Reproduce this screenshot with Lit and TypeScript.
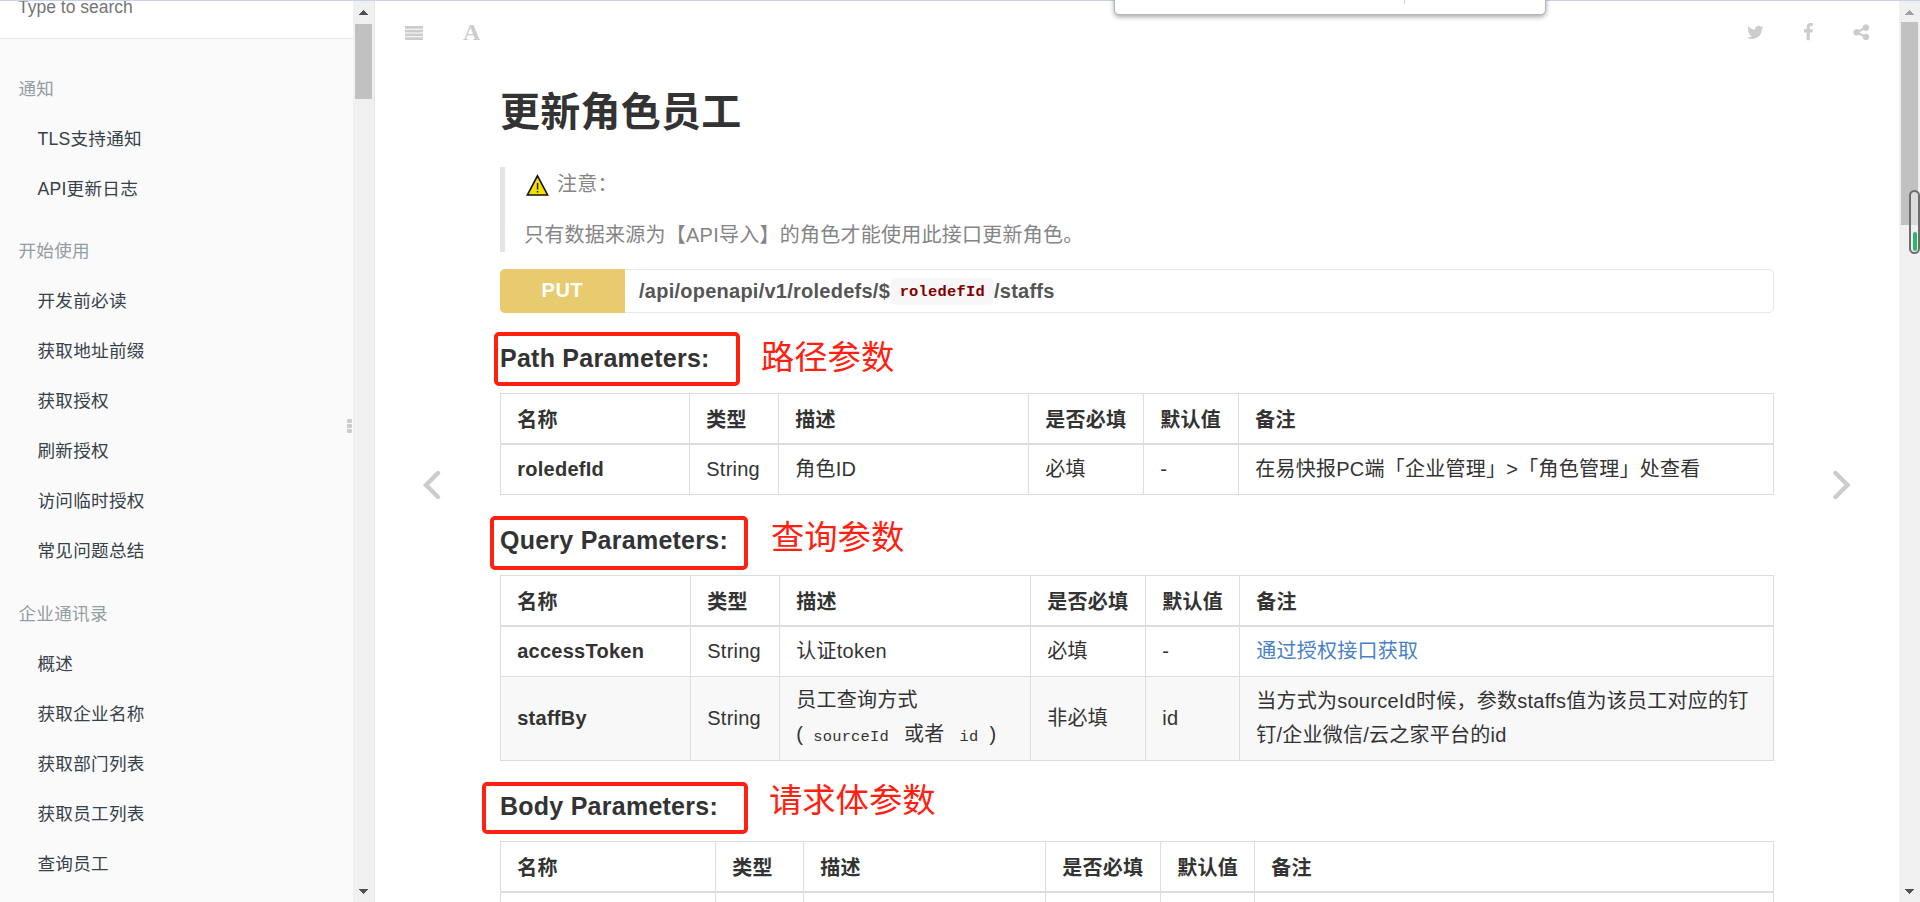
import { LitElement, html, css, svg, TemplateResult } from "lit";
import { customElement, property } from "lit/decorators.js";

interface Group { title: string; items: string[]; }

const GROUPS: Group[] = [
  { title: "通知", items: ["TLS支持通知", "API更新日志"] },
  { title: "开始使用", items: ["开发前必读", "获取地址前缀", "获取授权", "刷新授权", "访问临时授权", "常见问题总结"] },
  { title: "企业通讯录", items: ["概述", "获取企业名称", "获取部门列表", "获取员工列表", "查询员工"] },
];

const HEADERS = ["名称", "类型", "描述", "是否必填", "默认值", "备注"];

const TWITTER = "M1684 408q-67 98-162 167 1 14 1 42 0 130-38 259.5t-115.5 248.5-184.5 210.5-258 146-323 54.5q-271 0-496-145 35 4 78 4 225 0 401-138-105-2-188-64.5t-114-159.5q33 5 61 5 43 0 85-11-112-23-185.5-111.5t-73.5-205.5v-4q68 38 146 41-66-44-105-115t-39-154q0-88 44-163 121 149 294.5 238.5t371.5 99.5q-8-38-8-74 0-134 94.5-228.5t228.5-94.5q140 0 236 102 109-21 205-78-37 115-142 178 93-10 186-50z";
const FACEBOOK = "M1343 12v264h-157q-86 0-116 36t-30 108v189h293l-39 296h-254v759h-306v-759h-255v-296h255v-218q0-186 104-288.5t277-102.5q147 0 228 12z";
const SHARE = "M1344 1024q133 0 226.5 93.5t93.5 226.5-93.5 226.5-226.5 93.5-226.5-93.5-93.5-226.5q0-12 2-34l-360-180q-92 86-218 86-133 0-226.5-93.5t-93.5-226.5 93.5-226.5 226.5-93.5q126 0 218 86l360-180q-2-22-2-34 0-133 93.5-226.5t226.5-93.5 226.5 93.5 93.5 226.5-93.5 226.5-226.5 93.5q-126 0-218-86l-360 180q2 22 2 34t-2 34l360 180q92-86 218-86z";

@customElement("scroll-track")
class ScrollTrack extends LitElement {
  @property({ type: Number }) start = 0;
  @property({ type: Number }) size = 0;
  @property({ type: Boolean }) dim = false;

  static styles = css`
    :host { display: flex; flex-direction: column; align-items: center; width: 21px; height: 100%; background: #f0f0f0; box-sizing: border-box; padding: 10px 0 8px; flex: none; }
    .thumb { width: 17px; background: #c1c1c1; }
    .space { flex: 1; }
    svg { display: block; fill: #505050; }
    .dim { fill: #a3a3a3; }
  `;

  render() {
    return html`
      <svg class=${this.dim ? "dim" : ""} width="9" height="5" shape-rendering="crispEdges"><path d="M4 0h1v1h1v1h1v1h1v1h1v1H0V4h1V3h1V2h1V1h1z" /></svg>
      <div class="thumb" style="margin-top:${this.start - 15}px;height:${this.size}px"></div>
      <div class="space"></div>
      <svg width="9" height="5" shape-rendering="crispEdges"><path d="M0 0h9v1H8v1H7v1H6v1H5v1H4V4H3V3H2V2H1V1H0z" /></svg>`;
  }
}

@customElement("param-table")
class ParamTable extends LitElement {
  @property({ attribute: false }) widths: number[] = [];
  @property({ attribute: false }) rows: { cells: (string | TemplateResult)[]; height: number }[] = [];

  static styles = css`
    :host { display: block; }
    table { table-layout: fixed; width: 1274px; border-collapse: separate; border-spacing: 0; border-top: 1px solid #ddd; border-left: 1px solid #ddd; }
    th, td { box-sizing: border-box; padding: 0 0 0 16.25px; text-align: left; vertical-align: middle; border-right: 1px solid #ddd; border-bottom: 1px solid #ddd; line-height: 34px; color: #333; white-space: nowrap; }
    th { height: 51px; padding-top: 2px; border-bottom-width: 2px; font-weight: 700; }
    td { padding-bottom: 1px; }
    tbody tr:nth-child(even) td { background: #f8f8f8; }
    td:first-child { font-weight: 700; }
    .link { color: #4a80c8; text-decoration: none; }
    .code { font-family: "Liberation Mono", monospace; font-size: 15.4px; padding: 0 15px 0 10px; letter-spacing: 0.25px; }
    .code.last { padding: 0 11px 0 15px; }
  `;

  render() {
    return html`<table>
      <colgroup>${this.widths.map((w) => html`<col style="width:${w}px" />`)}</colgroup>
      <thead><tr>${HEADERS.map((h) => html`<th>${h}</th>`)}</tr></thead>
      <tbody>${this.rows.map((r) => html`<tr style="height:${r.height}px">${r.cells.map((c) => html`<td>${c}</td>`)}</tr>`)}</tbody>
    </table>`;
  }
}

@customElement("app-root")
class AppRoot extends LitElement {
  static styles = css`
    :host { display: flex; position: relative; width: 1920px; height: 902px; overflow: hidden; background: #fff; font-family: "Liberation Sans", "Noto Sans CJK SC", sans-serif; font-size: 20px; letter-spacing: 0.25px; color: #333; }
    .topline { position: absolute; left: 0; top: 0; width: 100%; height: 1px; background: #c6d3e8; z-index: 3; }
    .sidebar { display: flex; position: relative; width: 374px; height: 902px; border-right: 1px solid #e4e4e4; background: #fafafa; flex: none; }
    .nav { width: 353px; font-size: 17.6px; overflow: hidden; }
    .search { height: 38px; border-bottom: 1px solid #eaeaea; background: #fff; color: #757575; }
    .search span { display: block; padding-left: 18px; font-size: 17.5px; line-height: 14px; letter-spacing: 0; }
    .groups { padding-top: 25px; }
    .group { margin-bottom: 13px; }
    .group:first-child { margin-bottom: 12px; }
    .head, .item { height: 50px; line-height: 50px; white-space: nowrap; }
    .head { padding-left: 18.5px; color: #939da3; }
    .item { padding-left: 37.5px; color: #364149; }
    .grip { position: absolute; left: 347px; top: 419px; display: grid; gap: 1px; }
    .grip i { width: 5px; height: 4px; background: #ccc; border-radius: 1px; }

    .main { flex: 1; position: relative; height: 902px; overflow: hidden; }
    .toolbar { display: flex; align-items: center; height: 65px; padding: 0 28px 0 30px; }
    .toolbar svg { display: block; fill: #ccc; }
    .glyph-a { margin-left: 40px; font: 700 24px/65px "Liberation Serif", serif; color: #ccc; letter-spacing: 0; }
    .social { margin-left: auto; display: flex; align-items: center; gap: 34.5px; }
    .article { width: 1274px; margin-left: 125px; }
    h1 { margin: 0 0 10px; height: 92px; line-height: 94px; font-size: 40px; font-weight: 700; }
    .quote { box-sizing: border-box; height: 85px; border-left: 5px solid #e5e5e5; padding-left: 19px; color: #858585; display: flex; flex-direction: column; gap: 17px; }
    .quote p { margin: 0; line-height: 36px; height: 34px; display: flex; align-items: center; white-space: nowrap; }
    .quote svg { margin: 1px 8px 0 2px; }
    .endpoint { box-sizing: border-box; display: flex; margin-top: 17px; height: 44px; border: 1px solid #e8e8e8; border-radius: 5px; font-weight: 700; color: #555; line-height: 43px; }
    .method { width: 125px; margin: -1px 0 -1px -1px; height: 44px; background: #e9cb6f; color: #fff; text-align: center; border-radius: 5px 0 0 5px; letter-spacing: 0.6px; }
    .path { display: flex; align-items: center; padding-left: 14px; }
    .path code { height: 27px; padding: 0 9px 0 8.6px; border-radius: 5px; background: #f7f7f7; color: #800000; font: 700 15.4px/28px "Liberation Mono", monospace; margin-left: 1px; }
    h3 { position: relative; margin: 0; height: 80px; box-sizing: border-box; padding-top: 29px; line-height: 32px; font-size: 25px; font-weight: 700; }
    .box { position: absolute; box-sizing: border-box; border: 4px solid #ff2010; border-radius: 5px; }
    .note { position: absolute; font-size: 33.3px; line-height: 40px; font-weight: 400; color: #ff2010; letter-spacing: 0; white-space: nowrap; }
    .b1 { left: -6px; top: 19px; width: 246px; height: 54px; }
    .n1 { left: 261px; top: 25px; }
    .b2 { left: -10px; top: 21px; width: 258px; height: 54px; }
    .n2 { left: 271px; top: 23px; }
    .b3 { left: -18px; top: 21px; width: 266px; height: 52px; }
    .n3 { left: 269px; top: 20px; }
    .arrow { position: absolute; top: 470px; }
    .prev { left: 47px; }
    .next { left: 1457px; }
    .popup { position: absolute; left: 1114px; top: -10px; width: 432px; height: 25px; box-sizing: border-box; background: #fff; border-radius: 5px; border: 1px solid #b5b5b5; box-shadow: 0 2px 5px rgba(0,0,0,.35); z-index: 4; }
    .popup i { display: block; width: 1px; height: 13px; margin-left: 289px; background: #d0d0d0; }
    .meter { position: absolute; left: 1909px; top: 190px; width: 11px; height: 64px; box-sizing: border-box; border: 2px solid #6c6c6c; border-radius: 6px; background: rgba(240,240,240,.55); z-index: 4; display: flex; align-items: flex-end; justify-content: center; padding-bottom: 1px; }
    .meter i { width: 4px; height: 19px; border-radius: 2px; background: #28b866; }
  `;

  private icon(d: string) {
    return html`<svg width="18.6" height="18.6" viewBox="0 0 1792 1792">${svg`<path d=${d} />`}</svg>`;
  }

  render() {
    return html`
      <div class="topline"></div>
      <aside class="sidebar">
        <div class="nav">
          <div class="search"><span>Type to search</span></div>
          <div class="groups">
            ${GROUPS.map((g) => html`<div class="group">
              <div class="head">${g.title}</div>
              ${g.items.map((i) => html`<div class="item">${i}</div>`)}
            </div>`)}
          </div>
        </div>
        <scroll-track .start=${24} .size=${75}></scroll-track>
        <div class="grip"><i></i><i></i><i></i></div>
      </aside>

      <main class="main">
        <div class="toolbar">
          <svg width="18" height="14"><path d="M0 0h18v2.8H0zM0 3.8h18v2.7H0zM0 7.6h18v2.7H0zM0 11.3h18V14H0z" /></svg>
          <span class="glyph-a">A</span>
          <div class="social">${this.icon(TWITTER)}${this.icon(FACEBOOK)}${this.icon(SHARE)}</div>
        </div>

        <div class="article">
          <h1>更新角色员工</h1>
          <div class="quote">
            <p>
              <svg width="23" height="22" viewBox="0 0 23 22"><path d="M11.5 1.8L21.6 21H1.4z" fill="#f6e000" stroke="#111" stroke-width="1.6" /><path d="M10.8 9h1.5v6.5h-1.5zM10.8 17h1.5v1.6h-1.5z" fill="#222" /></svg>
              注意：
            </p>
            <p>只有数据来源为【API导入】的角色才能使用此接口更新角色。</p>
          </div>
          <div class="endpoint">
            <div class="method">PUT</div>
            <div class="path"><span>/api/openapi/v1/roledefs/$</span><code>roledefId</code><span>/staffs</span></div>
          </div>

          <h3>Path Parameters:<span class="box b1"></span><span class="note n1">路径参数</span></h3>
          <param-table .widths=${[189, 89, 250, 115, 95, 535]}
            .rows=${[{ height: 50, cells: ["roledefId", "String", "角色ID", "必填", "-", "在易快报PC端「企业管理」>「角色管理」处查看"] }]}></param-table>

          <h3>Query Parameters:<span class="box b2"></span><span class="note n2">查询参数</span></h3>
          <param-table .widths=${[190, 89, 251, 115, 94, 534]}
            .rows=${[
              { height: 50, cells: ["accessToken", "String", "认证token", "必填", "-", html`<a class="link">通过授权接口获取</a>`] },
              { height: 84, cells: ["staffBy", "String", html`员工查询方式<br />(<span class="code">sourceId</span>或者<span class="code last">id</span>)`, "非必填", "id", html`当方式为sourceId时候，参数staffs值为该员工对应的钉<br />钉/企业微信/云之家平台的id`] },
            ]}></param-table>

          <h3>Body Parameters:<span class="box b3"></span><span class="note n3">请求体参数</span></h3>
          <param-table .widths=${[215, 88, 242, 115, 94, 519]}
            .rows=${[{ height: 50, cells: ["", "", "", "", "", ""] }]}></param-table>
        </div>

        <svg class="arrow prev" width="20" height="30" fill="none" stroke="#ccc" stroke-width="4.4" stroke-linecap="round"><path d="M16 3L4 15L16 27" /></svg>
        <svg class="arrow next" width="20" height="30" fill="none" stroke="#ccc" stroke-width="4.4" stroke-linecap="round"><path d="M3.5 3L15.5 15L3.5 27" /></svg>
      </main>
      <scroll-track .start=${22} .size=${203} dim></scroll-track>

      <div class="popup"><i></i></div>
      <div class="meter"><i></i></div>
    `;
  }
}
